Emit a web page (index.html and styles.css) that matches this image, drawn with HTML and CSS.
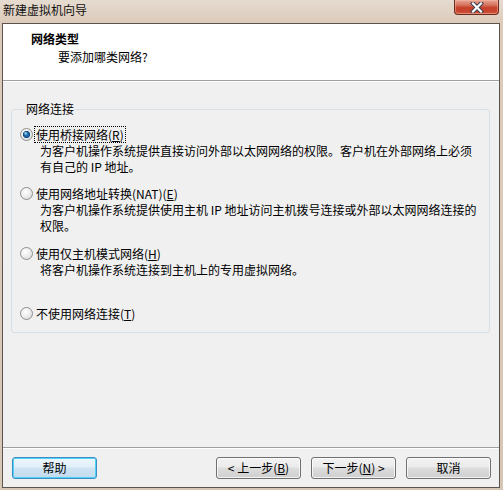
FILE: index.html
```html
<!DOCTYPE html>
<html lang="zh-CN">
<head>
<meta charset="utf-8">
<title>新建虚拟机向导</title>
<link rel="stylesheet" href="styles.css">
</head>
<body>
<div class="window">
  <div class="titlebar">
    <span class="title">新建虚拟机向导</span>
    <div class="close">
      <svg class="close-x" width="14" height="11" viewBox="0 0 14 11">
        <path d="M3 1.5 L11 9.5 M11 1.5 L3 9.5" stroke="#3b3f4f" stroke-width="4.2" stroke-linecap="square" fill="none"/>
        <path d="M3 1.5 L11 9.5 M11 1.5 L3 9.5" stroke="#ffffff" stroke-width="2.2" stroke-linecap="square" fill="none"/>
      </svg>
    </div>
  </div>
  <div class="frame">
    <div class="header">
      <div class="h-title">网络类型</div>
      <div class="h-sub">要添加哪类网络?</div>
    </div>
    <div class="main">
      <fieldset class="group">
        <legend class="legend">网络连接</legend>
        <div class="opt opt-first">
          <div class="opt-row"><span class="radio radio-checked"></span><span class="label label-focus">使用桥接网络(<span class="mn">R</span>)</span></div>
          <div class="desc">为客户机操作系统提供直接访问外部以太网网络的权限。客户机在外部网络上必须<br>有自己的 IP 地址。</div>
        </div>
        <div class="opt">
          <div class="opt-row"><span class="radio"></span><span class="label">使用网络地址转换(NAT)(<span class="mn">E</span>)</span></div>
          <div class="desc">为客户机操作系统提供使用主机 IP 地址访问主机拨号连接或外部以太网网络连接的<br>权限。</div>
        </div>
        <div class="opt">
          <div class="opt-row"><span class="radio"></span><span class="label">使用仅主机模式网络(<span class="mn">H</span>)</span></div>
          <div class="desc">将客户机操作系统连接到主机上的专用虚拟网络。</div>
        </div>
        <div class="opt opt-last">
          <div class="opt-row"><span class="radio"></span><span class="label">不使用网络连接(<span class="mn">T</span>)</span></div>
        </div>
      </fieldset>
    </div>
    <div class="footer">
      <button class="btn btn-default">帮助</button>
      <button class="btn btn-back">&lt; 上一步(<span class="mn">B</span>)</button>
      <button class="btn">下一步(<span class="mn">N</span>) &gt;</button>
      <button class="btn">取消</button>
    </div>
  </div>
</div>
</body>
</html>
```
FILE: styles.css
```css
* { box-sizing: border-box; }
html, body { margin: 0; padding: 0; }
body {
  width: 503px;
  height: 490px;
  overflow: hidden;
  background: linear-gradient(to bottom, #e6dbd0 0, #dccbbb 22px, #d8c6b5 100%);
  font-family: "Noto Sans CJK SC", "Noto Sans", sans-serif;
  font-size: 12px;
  color: #000;
}
.window { display: flex; flex-direction: column; height: 490px; }
.titlebar {
  height: 23px;
  display: flex;
  justify-content: space-between;
  align-items: flex-start;
}
.title { margin: 3px 0 0 3px; line-height: 14px; color: #111; }
.close {
  width: 45px;
  height: 15px;
  margin-right: 4px;
  border: 1px solid #6a2a1e;
  border-top: none;
  border-radius: 0 0 4px 4px;
  background: linear-gradient(to bottom, #e3a593 0, #d77660 35%, #c6402a 55%, #c9472f 85%, #d4684f 100%);
  box-shadow: inset 0 0 0 1px rgba(255, 190, 170, 0.45);
  display: flex;
  align-items: center;
  justify-content: center;
}
.close-x { display: block; }
.frame {
  margin: 0 3px 0 2px;
  height: 465px;
  border: 1px solid #5b534d;
  background: #f0f0f0;
  display: flex;
  flex-direction: column;
}
.header {
  height: 57px;
  flex: none;
  background: #fff;
  border-bottom: 1px solid #a0a0a0;
  padding: 7px 0 0 28px;
}
.h-title { font-weight: bold; line-height: 16px; }
.h-sub { line-height: 16px; margin: 2px 0 0 27px; }
.main {
  flex: 1;
  border-top: 1px solid #fff;
  border-bottom: 1px solid #a0a0a0;
  padding: 20px 9px 0 8px;
}
.group {
  margin: 0;
  padding: 10px 0 10px 8px;
  border: 1px solid #d5dfe5;
  border-radius: 3px;
  min-width: 0;
}
.legend { padding: 0 1px; margin-left: 5px; line-height: 14px; }
.opt { height: 60px; }
.opt-first { height: 59px; }
.opt-last { height: auto; }
.opt-row { display: flex; align-items: center; height: 17px; }
.radio {
  flex: none;
  width: 13px;
  height: 13px;
  margin-right: 1px;
  border-radius: 50%;
  border: 1px solid #8e8f8f;
  background: radial-gradient(circle at 40% 35%, #ffffff 0, #f3f3f3 35%, #d2d3d3 100%);
}
.radio-checked {
  background:
    radial-gradient(circle at 42% 38%, rgba(200, 240, 255, 0.95) 0, rgba(200, 240, 255, 0) 2px),
    radial-gradient(circle at 50% 50%, #2f86c8 0, #1b5f9f 2.6px, #0c3f73 3.4px, rgba(12, 63, 115, 0) 3.8px),
    radial-gradient(circle at 40% 35%, #ffffff 0, #f3f3f3 35%, #d2d3d3 100%);
}
.label {
  border: 1px solid transparent;
  padding: 0 1px;
  line-height: 15px;
  white-space: nowrap;
}
.label-focus { border: 1px dotted #000; }
.desc { padding-left: 20px; line-height: 16px; white-space: nowrap; }
.mn { text-decoration: underline; }
.footer {
  height: 39px;
  flex: none;
  border-top: 1px solid #fff;
  display: flex;
  align-items: flex-start;
  gap: 10px;
  padding: 8px 8px 0 9px;
}
.btn {
  width: 85px;
  height: 22px;
  padding: 0;
  border: 1px solid #707070;
  border-radius: 3px;
  background: linear-gradient(to bottom, #f2f2f2 0, #ebebeb 45%, #dddddd 50%, #cfcfcf 100%);
  box-shadow: inset 0 0 0 1px rgba(255, 255, 255, 0.75);
  font: inherit;
  line-height: 18px;
  color: #000;
  text-align: center;
}
.btn-default {
  border-color: #3c8fc4;
  background: linear-gradient(to bottom, #eef6fc 0, #e1eff9 45%, #cfe4f3 50%, #c2dbee 100%);
  box-shadow: inset 0 0 0 1px #4fd2f6;
}
.btn-back { margin-left: auto; }
```
